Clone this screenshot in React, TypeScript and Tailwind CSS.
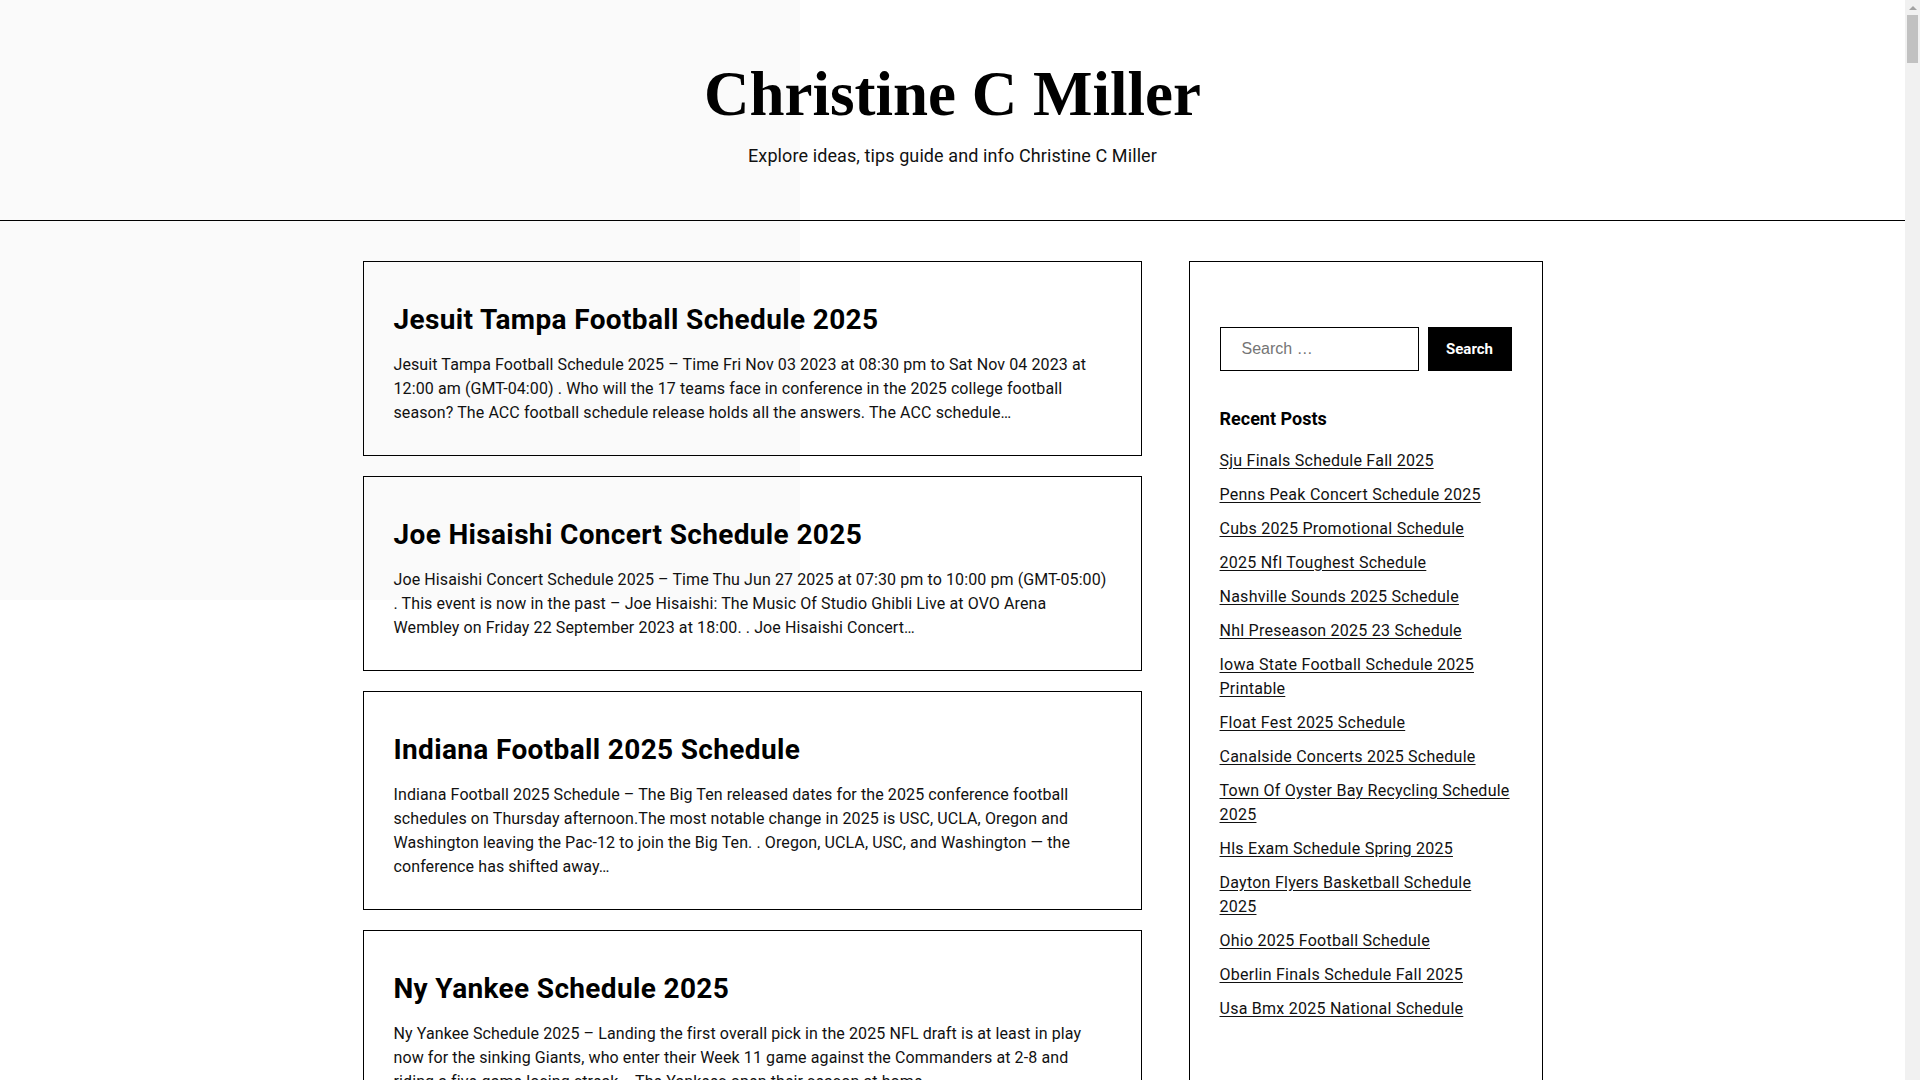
import React from "react";

const POSTS = [
  {
    title: "Jesuit Tampa Football Schedule 2025",
    excerpt:
      "Jesuit Tampa Football Schedule 2025 – Time Fri Nov 03 2023 at 08:30 pm to Sat Nov 04 2023 at 12:00 am (GMT-04:00) . Who will the 17 teams face in conference in the 2025 college football season? The ACC football schedule release holds all the answers. The ACC schedule…",
  },
  {
    title: "Joe Hisaishi Concert Schedule 2025",
    excerpt:
      "Joe Hisaishi Concert Schedule 2025 – Time Thu Jun 27 2025 at 07:30 pm to 10:00 pm (GMT-05:00) . This event is now in the past – Joe Hisaishi: The Music Of Studio Ghibli Live at OVO Arena Wembley on Friday 22 September 2023 at 18:00. . Joe Hisaishi Concert…",
  },
  {
    title: "Indiana Football 2025 Schedule",
    excerpt:
      "Indiana Football 2025 Schedule – The Big Ten released dates for the 2025 conference football schedules on Thursday afternoon.The most notable change in 2025 is USC, UCLA, Oregon and Washington leaving the Pac-12 to join the Big Ten. . Oregon, UCLA, USC, and Washington — the conference has shifted away…",
  },
  {
    title: "Ny Yankee Schedule 2025",
    excerpt:
      "Ny Yankee Schedule 2025 – Landing the first overall pick in the 2025 NFL draft is at least in play now for the sinking Giants, who enter their Week 11 game against the Commanders at 2-8 and riding a five-game losing streak. . The Yankees open their season at home…",
  },
];

const RECENT = [
  "Sju Finals Schedule Fall 2025",
  "Penns Peak Concert Schedule 2025",
  "Cubs 2025 Promotional Schedule",
  "2025 Nfl Toughest Schedule",
  "Nashville Sounds 2025 Schedule",
  "Nhl Preseason 2025 23 Schedule",
  "Iowa State Football Schedule 2025 Printable",
  "Float Fest 2025 Schedule",
  "Canalside Concerts 2025 Schedule",
  "Town Of Oyster Bay Recycling Schedule 2025",
  "Hls Exam Schedule Spring 2025",
  "Dayton Flyers Basketball Schedule 2025",
  "Ohio 2025 Football Schedule",
  "Oberlin Finals Schedule Fall 2025",
  "Usa Bmx 2025 National Schedule",
];

function PostCard({ title, excerpt }: { title: string; excerpt: string }) {
  return (
    <article className="border border-black px-[30px] pt-[40px] pb-[30px]">
      <h2 className="text-[28px] font-bold leading-9 tracking-[0.35px] text-black">
        <a href="#">{title}</a>
      </h2>
      <p className="mt-[15px] text-[16px] leading-6 tracking-[0.1px] text-[#111]">{excerpt}</p>
    </article>
  );
}

function Sidebar() {
  return (
    <aside className="w-[354px] self-start border border-black px-[30px] pt-[65px] pb-[120px]">
      <form className="flex gap-[9px]" onSubmit={(e) => e.preventDefault()}>
        <input
          type="search"
          placeholder="Search …"
          className="h-[44px] w-[199px] border border-black bg-transparent px-[21px] font-['Liberation_Sans',Arial,sans-serif] text-[16px] text-black outline-none placeholder:text-[#757575]"
        />
        <button className="h-[44px] w-[85px] bg-black text-[15px] font-bold text-white">Search</button>
      </form>
      <h2 className="mt-[36px] text-[18px] font-bold leading-[23px] text-black">Recent Posts</h2>
      <ul className="mt-[19px] flex flex-col gap-[10px]">
        {RECENT.map((r) => (
          <li key={r} className="text-[16px] leading-6 tracking-[0.25px]">
            <a href="#" className="text-[#111] underline underline-offset-2">
              {r}
            </a>
          </li>
        ))}
      </ul>
    </aside>
  );
}

// the page was captured with a classic scrollbar on the right
function ScrollGutter() {
  return (
    <div className="flex h-screen w-[15px] shrink-0 flex-col items-center bg-[#f1f1f1]">
      <div className="flex h-[15px] items-center justify-center">
        <div className="h-0 w-0 border-x-[4px] border-b-[4px] border-x-transparent border-b-[#a3a3a3]" />
      </div>
      <div className="h-[48px] w-[11px] bg-[#c1c1c1]" />
    </div>
  );
}

export default function App() {
  return (
    <div className="flex min-h-screen">
      <div className="min-w-0 flex-1 bg-white bg-[linear-gradient(#fafafa,#fafafa)] bg-[length:800px_600px] bg-no-repeat font-['Roboto',sans-serif] text-black">
        <header className="border-b border-black pt-[57px] pb-[52px] text-center">
          <h1 className="font-['Liberation_Serif',serif] text-[63px] font-bold leading-[74px]">
            <a href="#">Christine C Miller</a>
          </h1>
          <p className="mt-[13px] text-[18px] leading-6 tracking-[0.1px] text-[#111]">
            Explore ideas, tips guide and info Christine C Miller
          </p>
        </header>
        <div className="mx-auto flex w-[1180px] justify-between pt-10 pb-20">
          <main className="flex w-[779px] flex-col gap-5">
            {POSTS.map((p) => (
              <PostCard key={p.title} title={p.title} excerpt={p.excerpt} />
            ))}
          </main>
          <Sidebar />
        </div>
      </div>
      <ScrollGutter />
    </div>
  );
}
